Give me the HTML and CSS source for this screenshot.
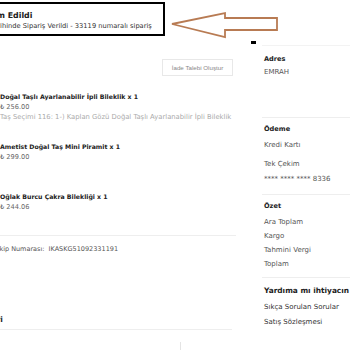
FILE: index.html
```html
<!DOCTYPE html>
<html lang="tr">
<head>
<meta charset="utf-8">
<link rel="stylesheet" href="styles.css">
</head>
<body>
<div class="page">
  <div class="main">
    <div class="status">
      <div class="status-title">Sipariş Teslim Edildi</div>
      <div class="status-sub">12 Mart 2023 tarihinde Sipariş Verildi - 33119 numaralı sipariş</div>
    </div>
    <div class="actions"><span class="btn">İade Talebi Oluştur</span></div>
    <div class="items">
      <div class="item">
        <div class="item-name">Doğal Taşlı Ayarlanabilir İpli Bileklik x 1</div>
        <div class="item-price">₺ 256.00</div>
        <div class="item-opt">Taş Seçimi 116: 1-) Kaplan Gözü Doğal Taşlı Ayarlanabilir İpli Bileklik</div>
      </div>
      <div class="item">
        <div class="item-name">Ametist Doğal Taş Mini Piramit x 1</div>
        <div class="item-price">₺ 299.00</div>
      </div>
      <div class="item">
        <div class="item-name">Oğlak Burcu Çakra Bilekliği x 1</div>
        <div class="item-price">₺ 244.06</div>
      </div>
    </div>
    <div class="tracking">Takip Numarası:&nbsp; IKASKG51092331191</div>
    <div class="sec-head">Fatura Bilgileri</div>
    <div class="foot"><span class="foot-tick"></span></div>
  </div>
  <div class="side">
    <div class="box">
      <div class="box-title">Adres</div>
      <div class="row">EMRAH</div>
    </div>
    <div class="box pay">
      <div class="box-title">Ödeme</div>
      <div class="row">Kredi Kartı</div>
      <div class="row gap">Tek Çekim</div>
      <div class="row">**** **** **** 8336</div>
    </div>
    <div class="box sum">
      <div class="box-title">Özet</div>
      <div class="row">Ara Toplam</div>
      <div class="row">Kargo</div>
      <div class="row">Tahmini Vergi</div>
      <div class="row">Toplam</div>
    </div>
    <div class="box help">
      <div class="help-title">Yardıma mı ihtiyacın ?</div>
      <div class="row dark">Sıkça Sorulan Sorular</div>
      <div class="row dark">Satış Sözleşmesi</div>
    </div>
  </div>
</div>
<span class="cursor"></span>
<svg class="arrow" width="120" height="40" viewBox="0 0 120 40">
  <polygon points="2,16 55,5 55,10 107,10 107,22 55,22 55,29" fill="none" stroke="#b87b53" stroke-width="1.8" stroke-linejoin="miter"/>
</svg>
</body>
</html>
```
FILE: styles.css
```css
html, body {
  margin: 0;
  padding: 0;
  background: #fff;
  overflow: hidden;
}
body {
  width: 350px;
  height: 350px;
  position: relative;
  font-family: "DejaVu Sans", "Liberation Sans", sans-serif;
  font-size: 6.6px;
  color: #333;
}
.page {
  display: flex;
  margin-left: -50px;
  gap: 26px;
}
.main {
  width: 236px;
  padding-left: 50px;
  flex: none;
}
.status {
  margin-top: 2px;
  margin-left: -58.5px;
  width: 219.5px;
  border: 2px solid #000;
  padding: 7px 0 3px 0;
  white-space: nowrap;
}
.status-title {
  font-size: 7.9px;
  font-weight: bold;
  line-height: 10px;
  color: #222;
}
.status-sub {
  line-height: 10px;
  font-size: 6.7px;
  color: #333;
}
.actions {
  display: flex;
  justify-content: flex-end;
  margin-top: 23px;
  padding-right: 3px;
}
.btn {
  border: 1px solid #e8e8e8;
  height: 15px;
  line-height: 15px;
  width: 69px;
  text-align: center;
  font-size: 6.2px;
  color: #888;
  font-family: "Liberation Sans", sans-serif;
}
.items {
  margin-top: 16px;
  border-bottom: 1px solid #eee;
  margin-left: -10px;
  padding-left: 10px;
}
.item {
  height: 50px;
  line-height: 10px;
  white-space: nowrap;
}
.item:last-child {
  height: 43px;
}
.item-name {
  font-size: 6.2px;
  font-weight: bold;
  color: #222;
}
.item-price {
  color: #666;
}
.item-opt {
  color: #aaa;
  font-size: 6.8px;
}
.tracking {
  margin-left: -7.5px;
  margin-top: 8px;
  line-height: 10px;
  font-size: 6.5px;
  color: #555;
}
.sec-head {
  margin-top: 61px;
  line-height: 10px;
  font-size: 7.5px;
  font-weight: bold;
  color: #222;
  margin-left: -60px;
}
.foot {
  margin-top: 4px;
  border-top: 1px solid #eee;
  margin-right: 4px;
  margin-left: -10px;
  height: 20px;
  position: relative;
}
.foot-tick {
  position: absolute;
  left: 190px;
  top: 12px;
  width: 1px;
  height: 8px;
  background: #e4e4e4;
}
.side {
  margin-top: 45px;
  width: 110px;
  flex: none;
  font-size: 7px;
}
.box {
  border-top: 1px solid #eee;
  padding: 8px 0 0 2px;
  display: flex;
  flex-direction: column;
  gap: 3px;
  line-height: 10px;
  color: #555;
}
.box:first-child {
  height: 72px;
  box-sizing: border-box;
  border-top-color: #f3f3f3;
}
.box-title {
  font-weight: bold;
  font-size: 6.6px;
  color: #222;
}
.pay {
  padding-top: 6px;
  padding-bottom: 10px;
  gap: 5px;
}
.pay .box-title {
  margin-bottom: 1px;
}
.pay .gap {
  margin-top: 4px;
}
.sum {
  padding-top: 6px;
  padding-bottom: 8px;
  gap: 4px;
}
.sum .box-title {
  margin-bottom: 2px;
}
.help {
  padding-top: 7px;
  gap: 5px;
}
.help-title {
  font-size: 7.4px;
  font-weight: 600;
  color: #222;
  line-height: 12px;
  white-space: nowrap;
}
.row.dark {
  color: #333;
}
.cursor {
  position: absolute;
  left: 251px;
  top: 41px;
  width: 5px;
  height: 3px;
  background: #000;
}
.arrow {
  position: absolute;
  left: 170px;
  top: 8px;
}
```
